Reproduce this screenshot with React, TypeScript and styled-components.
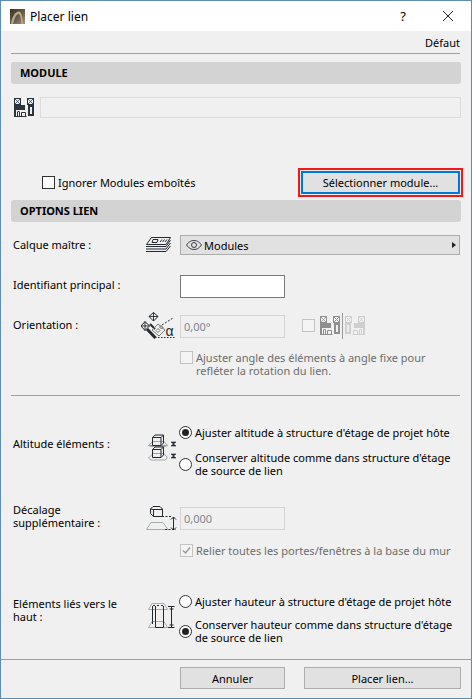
import React from 'react'
import styled, { createGlobalStyle } from 'styled-components'

const GlobalStyle = createGlobalStyle`
  html, body {
    margin: 0;
    padding: 0;
    background: #f0f0f0;
  }
  * {
    box-sizing: border-box;
  }
`

const AppLogo = () => (
  <svg width="15" height="15" viewBox="0 0 15 15">
    <defs>
      <linearGradient id="logoBg" x1="0" y1="0" x2="1" y2="1">
        <stop offset="0" stopColor="#3a3122" />
        <stop offset="0.6" stopColor="#6f614a" />
        <stop offset="1" stopColor="#a89a80" />
      </linearGradient>
    </defs>
    <rect width="15" height="15" fill="url(#logoBg)" />
    <path d="M1 15C2 8 5 2.5 9 2.5C11.5 2.5 12.5 8 13 15H11.5C11 9 10 5 8.5 5C6.5 5 4.5 9 3 15Z" fill="#b7aa90" />
  </svg>
)

const ModuleIcon = ({ color = '#2b333b' }: { color?: string }) => (
  <svg width="20" height="19" viewBox="0 0 20 19" fill="none" stroke={color}>
    <rect x="0.5" y="0.5" width="6" height="6" />
    <path d="M0.5 0.5l6 6M6.5 0.5l-6 6" strokeWidth="0.8" />
    <rect x="13.5" y="0.5" width="6" height="6" />
    <path d="M13.5 0.5l6 6M19.5 0.5l-6 6" strokeWidth="0.8" />
    <path d="M0 7H11V12H2V19H0Z" fill={color} stroke="none" />
    <path d="M2 18.5H12.5M3.5 18.5V14M5.5 18.5V14M3.5 13.5H5.5M7.5 18.5V14.5H11.5V18.5" />
    <path d="M14 7H20V18H14ZM16 9V16H18V9Z" fill={color} stroke="none" fillRule="evenodd" />
  </svg>
)

const LayerIcon = () => (
  <svg width="26" height="16" viewBox="0 0 26 16" fill="none" stroke="#23292f">
    <path d="M6.5 0.5H25.5L21 7.5H1.5Z" />
    <path d="M8 2.5H13L12 5.5H7Z" />
    <path d="M15 5L17 2.5M17.5 5L19.5 2.5M20 5L22 2.5" />
    <path d="M1 9.5H21L25.5 3M1 12H21L25.5 6M1 14.5H21L25.5 9" />
  </svg>
)

const OrientationIcon = () => (
  <svg width="36" height="27" viewBox="0 0 36 27" fill="none" stroke="#23292f">
    <path d="M12.5 0.5L17 4.5L12.5 9L8 4.5Z" />
    <path d="M8 4.5H17M12.5 0.5V9" strokeWidth="0.9" />
    <path d="M4 9.5L8.5 14L4 18.5L0 14Z" />
    <path d="M0 14H8.5M4 9.5V18.5" strokeWidth="0.9" />
    <path d="M6 17L14.5 26" strokeWidth="3" />
    <path d="M9 12L14 17" strokeWidth="2" />
    <path d="M11 18L17 12L24 18L18 24Z" stroke="#777" />
    <path d="M15 18.5L17 16.5L19 18.5L17 20.5ZM18.5 15L20 13.5L22 15.5L20.5 17Z" strokeWidth="0.8" stroke="#555" />
    <path d="M21 13L32 6" strokeDasharray="2 1.5" />
    <path d="M14 25.5H35" strokeDasharray="1.5 1.5" />
    <text x="24.5" y="24" fontSize="14" fill="#23292f" stroke="none" fontFamily="'Liberation Sans', sans-serif">α</text>
  </svg>
)

const EyeIcon = () => (
  <svg width="16" height="10" viewBox="0 0 16 10" fill="none" stroke="#3b4046">
    <path d="M0.5 5C3 1.5 5.5 0.5 8 0.5C10.5 0.5 13 1.5 15.5 5C13 8.5 10.5 9.5 8 9.5C5.5 9.5 3 8.5 0.5 5Z" />
    <circle cx="8" cy="5" r="2.5" />
  </svg>
)

const AltitudeIcon = () => (
  <svg width="29" height="27" viewBox="0 0 29 27" fill="none">
    <path d="M0.5 11.5L5 7.5H16L19.5 11.5H0.5M0.5 11.5L3 12.5H17L19.5 11.5" stroke="#a0a4a8" />
    <path d="M0.5 24L5 19.5H16L19.5 24L17 26H3Z" stroke="#a0a4a8" />
    <path d="M4.5 3.5L7 1H15.5V9L13 11.5H4.5ZM4.5 3.5H13V11.5M13 3.5L15.5 1" stroke="#23292f" />
    <path d="M4.5 15.5L7 13H15.5V21L13 23.5H4.5ZM4.5 15.5H13V23.5M13 15.5L15.5 13" stroke="#23292f" />
    <path d="M23 8H28L25.5 10L28 12H23L25.5 10ZM23 20H28L25.5 22L28 24H23L25.5 22Z" fill="#23292f" stroke="#23292f" strokeWidth="0.6" />
  </svg>
)

const OffsetIcon = () => (
  <svg width="31" height="25" viewBox="0 0 31 25" fill="none">
    <path d="M0.5 23.5L5 16.5H17L22 23.5Z" stroke="#a8acb0" />
    <path d="M4.5 3L7 0.5H14L16.5 3V10.5H7.5L4.5 7.5ZM7.5 3.5H16.5M7.5 3.5V10.5M4.5 3L7.5 3.5" stroke="#23292f" />
    <path d="M16 10.5H26M19 23.5H30" stroke="#23292f" strokeDasharray="2 1.5" />
    <path d="M27.5 11V24M25 13.5L27.5 11L30 13.5M25 21.5L27.5 24L30 21.5" stroke="#23292f" />
  </svg>
)

const HeightIcon = () => (
  <svg width="27" height="26" viewBox="0 0 27 26" fill="none">
    <path d="M0.5 6.5L4 0.5H16L19.5 6.5Z" stroke="#a8acb0" />
    <path d="M0.5 24.5L4 18.5H16L19.5 24.5Z" stroke="#a8acb0" />
    <path d="M4.5 3V21M7.5 3V24.5M15.5 3V24.5M7.5 24.5H15.5" stroke="#23292f" />
    <path d="M5 2.5H16" stroke="#23292f" strokeDasharray="2 2" />
    <path d="M23.5 4V24M20 3.5H26.5M20 24.5H26.5M21.5 6H25.5M21.5 22H25.5" stroke="#23292f" />
  </svg>
)

const Window = styled.div`
  width: 472px;
  height: 699px;
  display: flex;
  flex-direction: column;
  border: 1px solid #5f8cb5;
  background: #f0f0f0;
  color: #000;
  font-family: 'Noto Sans', 'Open Sans', sans-serif;
  font-size: 11px;
  line-height: 13px;
  overflow: hidden;
`

const TitleBar = styled.header`
  height: 30px;
  flex: none;
  display: flex;
  align-items: center;
  padding: 0 0 0 9px;
  background: #fff;
`

const TitleText = styled.span`
  margin-left: 5px;
  font-size: 12px;
  flex: 1;
`

const HelpButton = styled.span`
  width: 46px;
  text-align: center;
  font-size: 13px;
  padding-left: 2px;
`

const CloseButton = styled.span`
  width: 46px;
  display: flex;
  justify-content: center;
`

const Content = styled.main`
  flex: 1;
  padding: 0 10px;
  display: flex;
  flex-direction: column;
`

const PresetRow = styled.div`
  height: 23px;
  flex: none;
  display: flex;
  justify-content: flex-end;
  align-items: flex-end;
  padding: 0 0 4px;
  border-bottom: 1px solid #a0a0a0;
  margin-right: 1px;
`

const SectionBar = styled.h2<{ $top: number }>`
  margin: ${(p) => p.$top}px 0 0;
  height: 22px;
  flex: none;
  display: flex;
  align-items: center;
  padding: 0 0 1px 9px;
  background: #d3d3d3;
  border-radius: 3px;
  font-size: 11px;
  font-weight: 700;
`

const ModuleRow = styled.div`
  margin-top: 13px;
  height: 21px;
  display: flex;
  align-items: center;
  padding-left: 3px;
  gap: 6px;
`

const ModuleField = styled.div`
  flex: 1;
  height: 21px;
  border: 1px solid #dcdcdc;
`

const ActionRow = styled.div`
  margin-top: 50px;
  height: 29px;
  display: flex;
  align-items: center;
  justify-content: space-between;
  padding-left: 31px;
  margin-right: -2px;
`

const CheckLabel = styled.label`
  display: flex;
  align-items: center;
  gap: 3px;
`

const CheckBox = styled.span<{ $disabled?: boolean }>`
  width: 13px;
  height: 13px;
  flex: none;
  display: flex;
  align-items: center;
  justify-content: center;
  background: ${(p) => (p.$disabled ? '#f4f4f4' : '#fff')};
  border: 1px solid ${(p) => (p.$disabled ? '#c4c4c4' : '#333')};
`

const SelectFrame = styled.div`
  padding: 1px;
  width: 165px;
  height: 29px;
  border: 2px solid #f01818;
`

const SelectButton = styled.button`
  width: 100%;
  height: 100%;
  padding: 0;
  border: 2px solid #0078d7;
  background: #e1e1e1;
  font: inherit;
  color: inherit;
  margin: 0;
  display: block;
`

const FormRow = styled.div<{ $top: number; $height?: number }>`
  margin-top: ${(p) => p.$top}px;
  ${(p) => (p.$height ? `height: ${p.$height}px;` : '')}
  display: grid;
  grid-template-columns: 129px 38px 1fr;
  padding-left: 2px;
  margin-right: 1px;
`

const FieldLabel = styled.div<{ $top?: number }>`
  padding-top: ${(p) => p.$top ?? 0}px;
`

const IconCell = styled.div<{ $top?: number; $left?: number }>`
  display: flex;
  align-items: flex-start;
  margin-top: ${(p) => p.$top ?? 0}px;
  margin-left: ${(p) => p.$left ?? 0}px;
`

const Dropdown = styled.div`
  height: 20px;
  display: flex;
  align-items: center;
  gap: 2px;
  padding: 0 3px 0 5px;
  background: #e1e1e1;
  border: 1px solid #adadad;
`

const DropdownValue = styled.span`
  flex: 1;
`

const Arrow = styled.span`
  width: 0;
  height: 0;
  border-left: 4px solid #222;
  border-top: 3.5px solid transparent;
  border-bottom: 3.5px solid transparent;
`

const TextField = styled.div<{ $disabled?: boolean; $top?: number }>`
  width: 105px;
  height: 23px;
  margin-top: ${(p) => p.$top ?? 0}px;
  padding-left: 3px;
  display: flex;
  align-items: center;
  color: #7d8794;
  background: ${(p) => (p.$disabled ? '#f0f0f0' : '#fff')};
  border: 1px solid ${(p) => (p.$disabled ? '#d4d4d4' : '#7a7a7a')};
`

const OrientationControls = styled.div`
  display: flex;
  align-items: flex-start;
`

const MirrorGroup = styled.div`
  margin-left: 17px;
  display: flex;
  align-items: center;
  height: 27px;
  margin-top: -3px;
`

const MirrorIcons = styled.div`
  margin-left: 5px;
  display: flex;
  align-items: center;
  height: 27px;
`

const MirrorDivider = styled.span`
  width: 1px;
  height: 26px;
  margin: 0 2px;
  background: #9a9a9a;
`

const MutedFlip = styled.span`
  display: flex;
  transform: scaleX(-1);
`

const CheckOption = styled.label`
  grid-column: 3;
  display: flex;
  align-items: flex-start;
  gap: 3px;
  color: #6d6d6d;
`

const Divider = styled.hr`
  margin: 18px 1px 0 0;
  border: 0;
  height: 1px;
  background: #a0a0a0;
`

const RadioStack = styled.div<{ $gap: number }>`
  display: flex;
  flex-direction: column;
  gap: ${(p) => p.$gap}px;
  padding-top: 1px;
  margin-left: -1px;
`

const RadioOption = styled.label`
  display: flex;
  align-items: center;
  gap: 3px;
`

const RadioDot = styled.span<{ $on?: boolean }>`
  width: 13px;
  height: 13px;
  flex: none;
  border-radius: 50%;
  background: #fff;
  border: 1px solid #333;
  display: flex;
  align-items: center;
  justify-content: center;
  &::after {
    content: '';
    display: ${(p) => (p.$on ? 'block' : 'none')};
    width: 7px;
    height: 7px;
    border-radius: 50%;
    background: #222;
  }
`

const Footer = styled.footer`
  flex: none;
  height: 39px;
  padding: 7px 10px 0 179px;
  display: flex;
  justify-content: space-between;
  align-items: flex-start;
  border-top: 1px solid #a0a0a0;
`

const FooterButton = styled.button<{ $width: number }>`
  width: ${(p) => p.$width}px;
  height: 22px;
  padding: 0;
  font: inherit;
  color: inherit;
  background: #e1e1e1;
  border: 1px solid #adadad;
`

const App = () => (
  <>
    <GlobalStyle />
    <Window>
      <TitleBar>
        <AppLogo />
        <TitleText>Placer lien</TitleText>
        <HelpButton>?</HelpButton>
        <CloseButton>
          <svg width="10" height="10" viewBox="0 0 10 10" stroke="#222">
            <path d="M0 0L10 10M10 0L0 10" />
          </svg>
        </CloseButton>
      </TitleBar>
      <Content>
        <PresetRow>Défaut</PresetRow>
        <SectionBar $top={8}>MODULE</SectionBar>
        <ModuleRow>
          <ModuleIcon />
          <ModuleField />
        </ModuleRow>
        <ActionRow>
          <CheckLabel>
            <CheckBox />
            Ignorer Modules emboîtés
          </CheckLabel>
          <SelectFrame>
            <SelectButton>Sélectionner module...</SelectButton>
          </SelectFrame>
        </ActionRow>
        <SectionBar $top={3}>OPTIONS LIEN</SectionBar>

        <FormRow $top={13} $height={20}>
          <FieldLabel $top={3}>Calque maître :</FieldLabel>
          <IconCell $top={2} $left={3}>
            <LayerIcon />
          </IconCell>
          <Dropdown>
            <EyeIcon />
            <DropdownValue>Modules</DropdownValue>
            <Arrow />
          </Dropdown>
        </FormRow>

        <FormRow $top={20} $height={23}>
          <FieldLabel $top={3}>Identifiant principal :</FieldLabel>
          <span />
          <TextField />
        </FormRow>

        <FormRow $top={17} $height={23}>
          <FieldLabel $top={3}>Orientation :</FieldLabel>
          <IconCell $top={-3} $left={-1}>
            <OrientationIcon />
          </IconCell>
          <OrientationControls>
            <TextField $disabled>0,00°</TextField>
            <MirrorGroup>
              <CheckBox $disabled />
              <MirrorIcons>
                <ModuleIcon color="#8f8f8f" />
                <MirrorDivider />
                <MutedFlip>
                  <ModuleIcon color="#cfcfcf" />
                </MutedFlip>
              </MirrorIcons>
            </MirrorGroup>
          </OrientationControls>
        </FormRow>

        <FormRow $top={13} $height={26}>
          <CheckOption>
            <CheckBox $disabled />
            <span>
              Ajuster angle des éléments à angle fixe pour
              <br />
              refléter la rotation du lien.
            </span>
          </CheckOption>
        </FormRow>

        <Divider />

        <FormRow $top={29} $height={52}>
          <FieldLabel $top={12}>Altitude éléments :</FieldLabel>
          <IconCell $top={9} $left={6}>
            <AltitudeIcon />
          </IconCell>
          <RadioStack $gap={12}>
            <RadioOption>
              <RadioDot $on />
              Ajuster altitude à structure d'étage de projet hôte
            </RadioOption>
            <RadioOption>
              <RadioDot />
              <span>
                Conserver altitude comme dans structure d'étage
                <br />
                de source de lien
              </span>
            </RadioOption>
          </RadioStack>
        </FormRow>

        <FormRow $top={25} $height={28}>
          <FieldLabel $top={1}>
            Décalage
            <br />
            supplémentaire :
          </FieldLabel>
          <IconCell $top={4} $left={4}>
            <OffsetIcon />
          </IconCell>
          <TextField $disabled $top={5}>
            0,000
          </TextField>
        </FormRow>

        <FormRow $top={14} $height={13}>
          <CheckOption>
            <CheckBox $disabled>
              <svg width="9" height="9" viewBox="0 0 9 9" fill="none" stroke="#9a9a9a" strokeWidth="1.5">
                <path d="M1 4.5L3.5 7L8 1.5" />
              </svg>
            </CheckBox>
            Relier toutes les portes/fenêtres à la base du mur
          </CheckOption>
        </FormRow>

        <FormRow $top={37}>
          <FieldLabel $top={3}>
            Eléments liés vers le
            <br />
            haut :
          </FieldLabel>
          <IconCell $top={9} $left={6}>
            <HeightIcon />
          </IconCell>
          <RadioStack $gap={10}>
            <RadioOption>
              <RadioDot />
              Ajuster hauteur à structure d'étage de projet hôte
            </RadioOption>
            <RadioOption>
              <RadioDot $on />
              <span>
                Conserver hauteur comme dans structure d'étage
                <br />
                de source de lien
              </span>
            </RadioOption>
          </RadioStack>
        </FormRow>
      </Content>
      <Footer>
        <FooterButton $width={105}>Annuler</FooterButton>
        <FooterButton $width={157}>Placer lien...</FooterButton>
      </Footer>
    </Window>
  </>
)

export default App
